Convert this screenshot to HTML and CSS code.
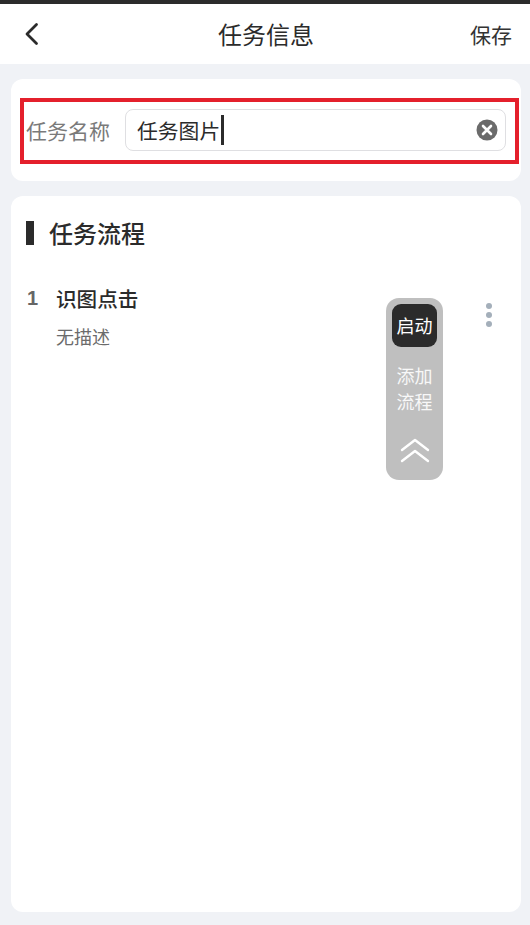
FILE: index.html
```
<!DOCTYPE html>
<html lang="zh">
<head>
<meta charset="utf-8">
<title>任务信息</title>
<link rel="stylesheet" href="styles.css">
</head>
<body>
<div class="page">
  <header class="header">
    <svg class="back" width="16" height="26" viewBox="0 0 16 26"><path d="M12.5 3.5 L3 13 L12.5 22.5" fill="none" stroke="#2b2b2b" stroke-width="2.8" stroke-linecap="round" stroke-linejoin="round"/></svg>
    <h1 class="title">任务信息</h1>
    <span class="save">保存</span>
  </header>
  <section class="card name-card">
    <div class="name-row">
      <span class="name-label">任务名称</span>
      <div class="input">
        <span class="input-text">任务图片</span><span class="caret"></span>
        <svg class="clear" width="22" height="22" viewBox="0 0 22 22"><circle cx="11" cy="11" r="10.5" fill="#6b6b6b"/><path d="M7 7 L15 15 M15 7 L7 15" stroke="#fff" stroke-width="2.6" stroke-linecap="round"/></svg>
      </div>
    </div>
  </section>
  <section class="card flow-card">
    <div class="flow-head">
      <span class="flow-mark"></span>
      <h2 class="flow-title">任务流程</h2>
    </div>
    <div class="step">
      <span class="step-no">1</span>
      <div class="step-body">
        <div class="step-name">识图点击</div>
        <div class="step-desc">无描述</div>
      </div>
      <div class="dots"><i></i><i></i><i></i></div>
    </div>
  </section>
  <aside class="float">
    <div class="start">启动</div>
    <div class="add">添加<br>流程</div>
    <svg class="up" width="30" height="26" viewBox="0 0 30 26"><path d="M2 13 L15 3 L28 13 M2 24 L15 14 L28 24" fill="none" stroke="#fff" stroke-width="2.4" stroke-linecap="round" stroke-linejoin="round"/></svg>
  </aside>
</div>
</body>
</html>
```
FILE: styles.css
```
* { box-sizing: border-box; }
html, body { margin: 0; padding: 0; }
body { font-family: "Noto Sans CJK SC", "Liberation Sans", sans-serif; color: #2b2b2b; }
.page { position: relative; width: 530px; height: 925px; background: #f0f2f6; border-top: 4px solid #2b2b2b; padding: 0 9px 13px 11px; display: flex; flex-direction: column; overflow: hidden; }
.header { margin: 0 -9px 0 -11px; height: 60px; background: #fff; display: flex; align-items: center; justify-content: space-between; padding: 0 18px 0 24px; position: relative; flex: none; }
.back { display: block; }
.title { position: absolute; left: 0; right: 0; margin: 0; padding-left: 2px; text-align: center; font-size: 24px; font-weight: 400; line-height: 58px; pointer-events: none; }
.save { font-size: 21px; color: #333; line-height: 58px; }
.card { background: #fff; border-radius: 12px; }
.name-card { margin-top: 15px; height: 102px; padding: 19px 2px 0 9px; flex: none; }
.name-row { height: 66px; border: 4px solid #e4202c; display: flex; align-items: center; padding: 0 9px 2px 2px; }
.name-label { font-size: 21px; color: #7a7a7a; width: 99px; flex: none; }
.input { flex: 1; height: 42px; border: 1px solid #dfdfe2; border-radius: 8px; background: #fff; display: flex; align-items: center; padding: 0 7px 0 11px; }
.input-text { font-size: 20.8px; color: #2b2b2b; }
.caret { width: 3px; height: 30px; background: #2b2b2b; margin-left: 1px; }
.clear { margin-left: auto; display: block; }
.flow-card { margin-top: 15px; flex: 1; padding: 19px 15px 0; }
.flow-head { display: flex; align-items: center; height: 36px; }
.flow-mark { width: 8px; height: 24px; background: #2b2b2b; flex: none; }
.flow-title { margin: 0 0 0 15px; font-size: 24px; font-weight: 500; line-height: 36px; }
.step { display: flex; margin-top: 32px; position: relative; }
.step-no { width: 29px; font-family: "Liberation Sans", sans-serif; font-size: 20px; font-weight: 700; color: #666; line-height: 30px; flex: none; margin-left: 1px; }
.step-body { flex: 1; }
.step-name { font-size: 20.6px; font-weight: 500; line-height: 30px; color: #2b2b2b; }
.step-desc { font-size: 18px; color: #6b6b6b; line-height: 26px; margin-top: 10px; }
.dots { display: flex; flex-direction: column; gap: 3px; margin: 20px 14px 0 0; }
.dots i { display: block; width: 6px; height: 6px; border-radius: 50%; background: #a4afba; }
.float { position: absolute; left: 386px; top: 294px; width: 57px; height: 182px; background: #bfbfbf; border-radius: 13px; padding: 6px 6px 0; display: flex; flex-direction: column; align-items: center; color: #fff; }
.start { width: 45px; height: 43px; background: #2b2b2b; border-radius: 9px; font-size: 18px; line-height: 43px; text-align: center; color: #fff; flex: none; }
.add { font-size: 18px; line-height: 26px; text-align: center; margin-top: 15px; color: #f8f8f8; }
.up { display: block; margin-top: 23px; }
```
